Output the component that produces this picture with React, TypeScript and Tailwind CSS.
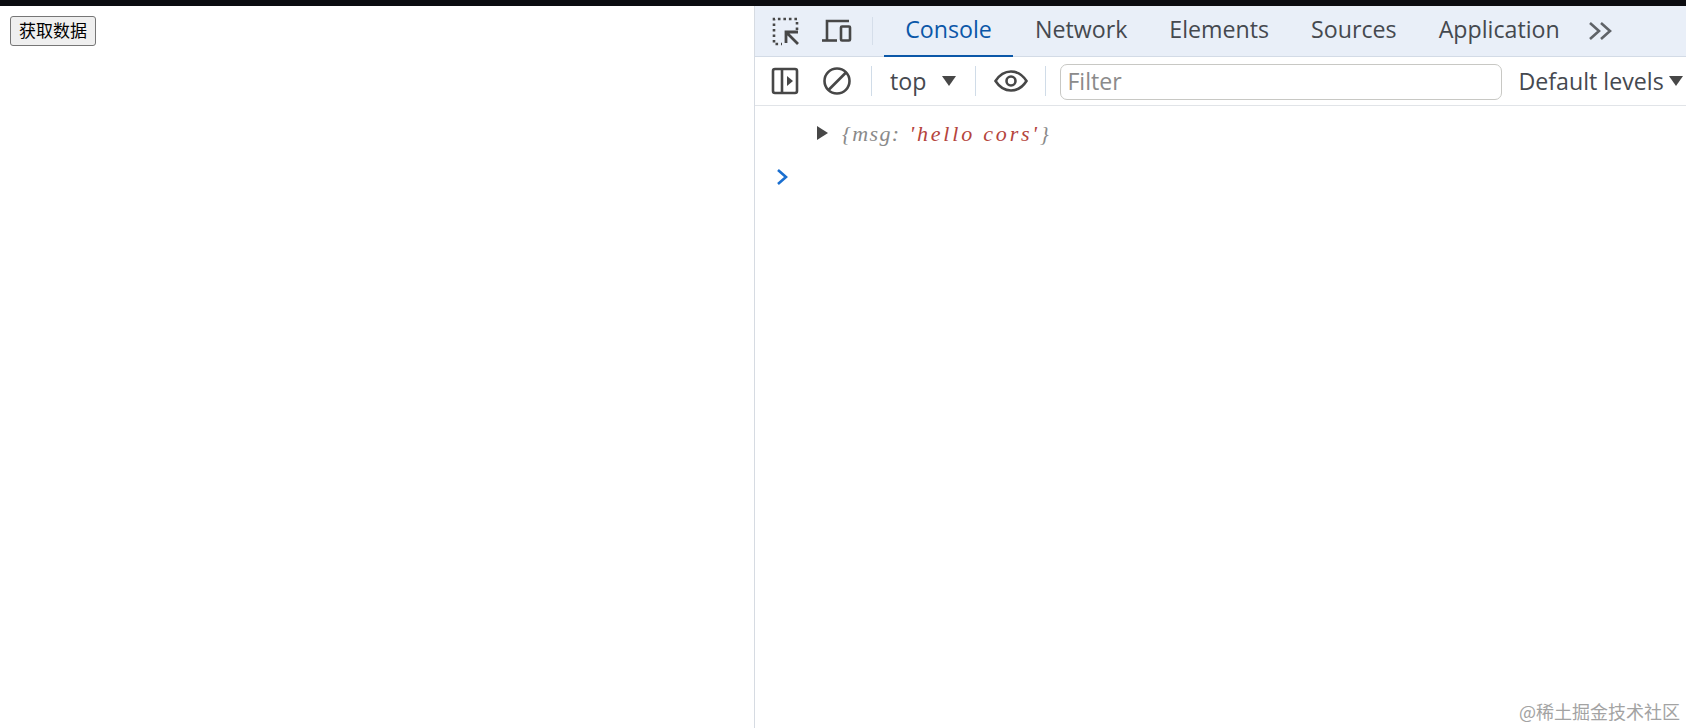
const TABS = ['Network', 'Elements', 'Sources', 'Application'];

function InspectIcon() {
  return (
    <svg width="30" height="30" viewBox="0 0 30 30" fill="none" stroke="#474747" strokeWidth="2.6">
      <path d="M26 14V3H3v25h8" strokeDasharray="2.600 2.900" />
      <path d="M27 28 L15 16 M15 27 V16 H27" strokeWidth="2.800" />
    </svg>
  );
}

function DeviceIcon() {
  return (
    <svg width="32" height="30" viewBox="0 0 32 30" fill="none" stroke="#474747" strokeWidth="2.6">
      <path d="M6 24V5h22" />
      <path d="M1 24.500h15" />
      <rect x="20" y="10.500" width="9" height="14" rx="1" />
    </svg>
  );
}

function SidebarIcon() {
  return (
    <svg width="28" height="28" viewBox="0 0 28 28" fill="none" stroke="#474747" strokeWidth="2.6">
      <rect x="2" y="2" width="24" height="24" rx="2" />
      <path d="M11 2v24" />
      <path d="M16 9l6 5-6 5z" fill="#474747" stroke="none" />
    </svg>
  );
}

function ClearIcon() {
  return (
    <svg width="28" height="28" viewBox="0 0 28 28" fill="none" stroke="#474747" strokeWidth="2.6">
      <circle cx="14" cy="14" r="12.500" />
      <path d="M5.500 23 L23 5.500" />
    </svg>
  );
}

function EyeIcon() {
  return (
    <svg width="34" height="24" viewBox="0 0 34 24" fill="none" stroke="#474747" strokeWidth="2.6">
      <path d="M1.500 12C6 5 11 2.500 17 2.500S28 5 32.500 12C28 19 23 21.500 17 21.500S6 19 1.500 12z" />
      <circle cx="17" cy="12" r="4.500" />
    </svg>
  );
}

function Caret() {
  return <span className="w-0 h-0 border-x-[7px] border-x-transparent border-t-[10px] border-t-[#474747]" />;
}

function Divider() {
  return <div className="w-px h-[30px] bg-[#d0dce8]" />;
}

export default function App() {
  return (
    <div className="w-[1686px] h-[728px] flex flex-col overflow-hidden relative bg-white font-['Open_Sans',sans-serif]">
      <div className="h-[6px] bg-[#0b0c10] shrink-0" />
      <div className="flex flex-1 min-h-0">
        {/* page */}
        <div className="w-[754px] shrink-0 pl-[10px] pt-[10px]">
          <button className="w-[86px] h-[30px] pb-[3px] bg-[#efefef] border border-[#767676] rounded-[3px] text-[17px] leading-none text-black font-['Noto_Sans_CJK_SC',sans-serif]">
            获取数据
          </button>
        </div>

        {/* devtools */}
        <div className="flex-1 border-l border-[#d6dbe2] flex flex-col min-w-0">
          <div className="h-[51px] bg-[#e9eff8] border-b border-[#d3dbe6] flex items-center shrink-0">
            <div className="ml-[16px] w-[30px] flex"><InspectIcon /></div>
            <div className="ml-[20px] flex"><DeviceIcon /></div>
            <div className="ml-[19px] w-px h-[28px] bg-[#d5deea]" />
            <div className="ml-[11px] h-full w-[129px] border-b-2 border-[#0b57a8] flex items-center justify-center pb-[3px] text-[#0b57a8] text-[23.200px] mb-[-1px]">
              Console
            </div>
            <div className="flex ml-[22px] gap-[42px] pb-[3px] text-[23.200px] text-[#45494f]">
              {TABS.map((t) => (
                <span key={t}>{t}</span>
              ))}
            </div>
            <svg className="ml-[28px]" width="24" height="20" viewBox="0 0 24 20" fill="none" stroke="#5f6368" strokeWidth="2.6">
              <path d="M2 2l9 8-9 8M13 2l9 8-9 8" />
            </svg>
          </div>

          <div className="h-[49px] border-b border-[#e1e4e8] flex items-center shrink-0">
            <div className="ml-[16px] flex"><SidebarIcon /></div>
            <div className="ml-[24px] flex"><ClearIcon /></div>
            <div className="ml-[20px]"><Divider /></div>
            <span className="ml-[18px] pt-[1px] text-[23.200px] text-[#45494f]">top</span>
            <div className="ml-[16px] flex"><Caret /></div>
            <div className="ml-[19px]"><Divider /></div>
            <div className="ml-[18px] flex"><EyeIcon /></div>
            <div className="ml-[17px]"><Divider /></div>
            <div className="ml-[14px] w-[442px] h-[36px] mt-[1px] border border-[#c8c8c4] rounded-[7px] flex items-center pl-[6px] text-[23.200px] text-[#8b8b8b]">
              Filter
            </div>
            <span className="ml-[16px] pt-[1px] text-[23.200px] text-[#45494f] whitespace-nowrap">Default levels</span>
            <div className="ml-[5px] flex"><Caret /></div>
          </div>

          <div className="flex-1">
            <div className="flex items-center h-[40px] mt-[7px] pl-[62px]">
              <span className="w-0 h-0 border-y-[7px] border-y-transparent border-l-[11px] border-l-[#474747]" />
              <span className="ml-[14px] font-['Liberation_Serif',serif] italic text-[22px] tracking-[1.400px] text-[#8a8a8a] whitespace-pre">
                {'{msg: '}
                <span className="ml-[2px] tracking-[2.800px] text-[#b5443c]">'hello cors'</span>
                {'}'}
              </span>
            </div>
            <div className="pl-[20px] pt-[15px] flex">
              <svg width="16" height="18" viewBox="0 0 16 18" fill="none" stroke="#1a6fd0" strokeWidth="2.6">
                <path d="M3 2l8 7-8 7" />
              </svg>
            </div>
          </div>
        </div>
      </div>

      <span className="absolute right-[6px] bottom-[3px] text-[18px] text-[#a3a3a3] font-['Noto_Sans_CJK_SC',sans-serif]">
        @稀土掘金技术社区
      </span>
    </div>
  );
}
